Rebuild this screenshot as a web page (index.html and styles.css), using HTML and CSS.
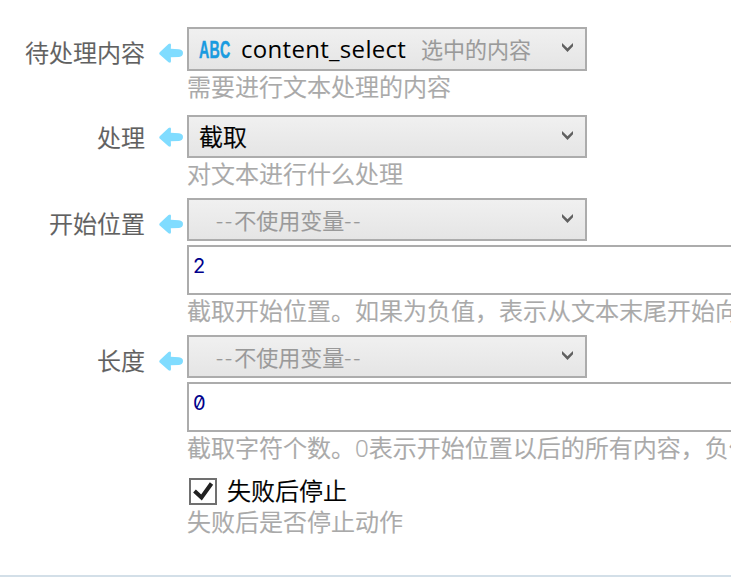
FILE: index.html
```
<!DOCTYPE html>
<html lang="zh-CN">
<head>
	<meta charset="UTF-8">
	<meta name="viewport" content="width=device-width, initial-scale=1.0">
	<title>文本处理</title>
	<link rel="stylesheet" href="styles.css">
</head>

<body>
<svg class="defs" width="0" height="0">
	<symbol id="arrow" viewBox="0 0 24 20">
		<path d="M1 9 L9.5 1 Q12 -.5 12 2 L11.8 5.7 L20 6.3 Q24 6.8 24 10 Q24 13.6 20 14 L11.8 14.3 L12 18 Q12 20.6 9.5 19.2 L1 11.8 Q-.5 10.4 1 9 Z"/>
	</symbol>
	<symbol id="chevron" viewBox="0 0 11 9">
		<path d="M0 0 L5.5 5.2 L11 0 V3.2 L5.5 9 L0 3.2 Z" fill="#606060"/>
	</symbol>
</svg>

<form class="params">
	<div class="row row-content">
		<label class="name">待处理内容</label>
		<svg class="arrow"><use href="#arrow"/></svg>
		<div class="field">
			<div class="combo">
				<span class="abc"><b>ABC</b></span>
				<span class="var">content_select</span>
				<span class="desc">选中的内容</span>
				<svg class="chevron"><use href="#chevron"/></svg>
			</div>
			<div class="hint">需要进行文本处理的内容</div>
		</div>
	</div>

	<div class="row row-action">
		<label class="name">处理</label>
		<svg class="arrow"><use href="#arrow"/></svg>
		<div class="field">
			<div class="combo">
				<span class="value">截取</span>
				<svg class="chevron"><use href="#chevron"/></svg>
			</div>
			<div class="hint">对文本进行什么处理</div>
		</div>
	</div>

	<div class="row row-start">
		<label class="name">开始位置</label>
		<svg class="arrow"><use href="#arrow"/></svg>
		<div class="field">
			<div class="combo">
				<span class="none"><i>--</i>不使用变量<i>--</i></span>
				<svg class="chevron"><use href="#chevron"/></svg>
			</div>
			<div class="input">2</div>
			<div class="hint">截取开始位置。如果为负值，表示从文本末尾开始向</div>
		</div>
	</div>

	<div class="row row-length">
		<label class="name">长度</label>
		<svg class="arrow"><use href="#arrow"/></svg>
		<div class="field">
			<div class="combo">
				<span class="none"><i>--</i>不使用变量<i>--</i></span>
				<svg class="chevron"><use href="#chevron"/></svg>
			</div>
			<div class="input">0</div>
			<div class="hint">截取字符个数。0表示开始位置以后的所有内容，负值</div>
		</div>
	</div>

	<div class="row row-stop">
		<div class="field">
			<div class="check">
				<svg class="box" width="28" height="27" viewBox="0 0 28 27">
					<rect x="1" y="1" width="26" height="25" fill="#fff" stroke="#707070" stroke-width="2"/>
					<path d="M5.5 13 L12.5 19.5 L22.5 5.5" fill="none" stroke="#212121" stroke-width="4"/>
				</svg>
				<span>失败后停止</span>
			</div>
			<div class="hint">失败后是否停止动作</div>
		</div>
	</div>
</form>
</body>
</html>
```
FILE: styles.css
```
* {
	box-sizing: border-box;
}
body {
	margin: 0;
	height: 585px;
	overflow: hidden;
	background: #fff;
	font-family: "Open Sans", "Noto Sans CJK SC", sans-serif;
	font-size: 24px;
	font-weight: 350;
	color: #000;
}
.defs {
	display: block;
}
.params {
	height: 577px;
	padding-top: 27px;
	border-bottom: 2px solid #d3dfe8;
}
.row {
	display: grid;
	grid-template-columns: 145px 38px 1fr;
	align-items: start;
	column-gap: 0;
}
.row-content {
	height: 88px;
}
.row-action {
	height: 83px;
}
.row-start {
	height: 137px;
}
.row-length {
	height: 143px;
}

.name {
	padding-top: 10px;
	line-height: 32px;
	text-align: right;
	color: #606060;
	-webkit-text-stroke: 0.2px;
}
.arrow {
	width: 24px;
	height: 20px;
	margin: 16px 0 0 14px;
	fill: #80dcff;
}
.row-action .name {
	padding-top: 7px;
}
.row-action .arrow {
	margin-top: 12px;
}

.field {
	grid-column: 3;
	min-width: 0;
	padding-left: 4px;
}
.combo {
	display: flex;
	align-items: center;
	width: 400px;
	height: 43px;
	padding: 0 12px 0 10px;
	border: 2px solid #acacac;
	background: linear-gradient(#f0f0f0, #e5e5e5);
	line-height: 32px;
	white-space: nowrap;
}
.row-content .combo {
	height: 44px;
}
.abc {
	flex: none;
	width: 30px;
}
.abc b {
	display: inline-block;
	transform: scaleX(0.59);
	transform-origin: left;
	font-family: "Liberation Sans", sans-serif;
	font-weight: bold;
	letter-spacing: 0.5px;
	color: #1a9be0;
	-webkit-text-stroke: 0.5px;
}
.var {
	width: 166px;
	margin-left: 12px;
	font-weight: 400;
	letter-spacing: 0.3px;
}
.desc {
	margin-left: 14px;
	font-size: 22px;
	color: #999;
	-webkit-text-stroke: 0.2px;
}
.value {
	-webkit-text-stroke: 0.2px;
}
.none {
	padding-left: 17px;
	font-size: 22px;
	color: #999;
	-webkit-text-stroke: 0.2px;
}
.none i {
	font-style: normal;
	letter-spacing: 2px;
}
.chevron {
	flex: none;
	width: 11px;
	height: 9px;
	margin-left: auto;
	margin-bottom: 3px;
}

.input {
	height: 50px;
	margin-top: 4px;
	padding: 4px;
	border: 2px solid #acacac;
	border-right: 0;
	font-family: Inter, sans-serif;
	font-size: 20px;
	font-weight: 400;
	font-feature-settings: "zero";
	line-height: 30px;
	color: #00008b;
}
.hint {
	height: 32px;
	overflow: hidden;
	line-height: 32px;
	white-space: nowrap;
	color: #a9a9a9;
	-webkit-text-stroke: 0.2px;
}

.check {
	display: flex;
	align-items: center;
	gap: 10px;
	height: 27px;
	padding-left: 2px;
	line-height: 27px;
}
.check span {
	margin-top: -2px;
	-webkit-text-stroke: 0.2px;
}
.row-stop .hint {
	margin-top: 1px;
}
```
